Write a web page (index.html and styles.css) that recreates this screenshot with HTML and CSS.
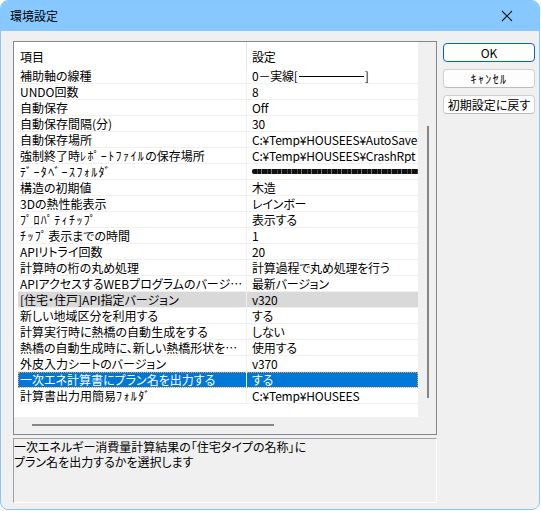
FILE: index.html
```html
<!DOCTYPE html>
<html lang="ja">
<head>
<meta charset="utf-8">
<title>環境設定</title>
<link rel="stylesheet" href="styles.css">
</head>
<body>
<div class="window">
  <div class="titlebar">
    <span class="title">環境設定</span>
    <svg class="close" width="12" height="12" viewBox="0 0 12 12"><path d="M1 1 L11 11 M11 1 L1 11" stroke="#1a1a1a" stroke-width="1.1" fill="none"/></svg>
  </div>
  <div class="content">
    <div class="main">
      <div class="listbox">
        <div class="view">
          <div class="row header"><div class="c1">項目</div><div class="c2">設定</div></div>
          <div class="row"><div class="c1">補助軸の線種</div><div class="c2">0－実線[<span class="line"></span>]</div></div>
          <div class="row"><div class="c1">UNDO回数</div><div class="c2">8</div></div>
          <div class="row"><div class="c1">自動保存</div><div class="c2">Off</div></div>
          <div class="row"><div class="c1">自動保存間隔(分)</div><div class="c2">30</div></div>
          <div class="row"><div class="c1">自動保存場所</div><div class="c2">C:¥Temp¥HOUSEES¥AutoSave</div></div>
          <div class="row"><div class="c1">強制終了時<span class="hw">ﾚﾎﾟｰﾄﾌｧｲﾙ</span>の保存場所</div><div class="c2">C:¥Temp¥HOUSEES¥CrashRpt</div></div>
          <div class="row"><div class="c1"><span class="hw">ﾃﾞｰﾀﾍﾞｰｽﾌｫﾙﾀﾞ</span></div><div class="c2"><span class="redacted"></span></div></div>
          <div class="row"><div class="c1">構造の初期値</div><div class="c2">木造</div></div>
          <div class="row"><div class="c1">3Dの熱性能表示</div><div class="c2">レインボー</div></div>
          <div class="row"><div class="c1"><span class="hw">ﾌﾟﾛﾊﾟﾃｨﾁｯﾌﾟ</span></div><div class="c2">表示する</div></div>
          <div class="row"><div class="c1"><span class="hw">ﾁｯﾌﾟ</span>表示までの時間</div><div class="c2">1</div></div>
          <div class="row"><div class="c1">APIリトライ回数</div><div class="c2">20</div></div>
          <div class="row"><div class="c1">計算時の桁の丸め処理</div><div class="c2">計算過程で丸め処理を行う</div></div>
          <div class="row"><div class="c1">APIアクセスするWEBプログラムのバージョン</div><div class="c2">最新バージョン</div></div>
          <div class="row grey"><div class="c1">[住宅・住戸]API指定バージョン</div><div class="c2">v320</div></div>
          <div class="row"><div class="c1">新しい地域区分を利用する</div><div class="c2">する</div></div>
          <div class="row"><div class="c1">計算実行時に熱橋の自動生成をする</div><div class="c2">しない</div></div>
          <div class="row"><div class="c1">熱橋の自動生成時に、新しい熱橋形状を使用する</div><div class="c2">使用する</div></div>
          <div class="row"><div class="c1">外皮入力シートのバージョン</div><div class="c2">v370</div></div>
          <div class="row selected"><div class="c1">一次エネ計算書にプラン名を出力する</div><div class="c2">する</div></div>
          <div class="row"><div class="c1">計算書出力用簡易<span class="hw">ﾌｫﾙﾀﾞ</span></div><div class="c2">C:¥Temp¥HOUSEES</div></div>
        </div>
        <div class="vscroll"><div class="vthumb"></div></div>
        <div class="hscroll"><div class="hthumb"></div></div>
        <div class="corner"></div>
      </div>
      <div class="desc">一次エネルギー消費量計算結果の「住宅タイプの名称」に<br>プラン名を出力するかを選択します</div>
    </div>
    <div class="buttons">
      <button class="btn default">OK</button>
      <button class="btn"><span class="hw">ｷｬﾝｾﾙ</span></button>
      <button class="btn">初期設定に戻す</button>
    </div>
  </div>
</div>
</body>
</html>
```
FILE: styles.css
```css
* { box-sizing: border-box; }
html, body { margin: 0; padding: 0; background: #ffffff; }
body {
  font-family: "Noto Sans CJK JP", "Noto Sans", sans-serif;
  font-size: 12px;
  color: #000;
  font-feature-settings: "palt";
}
.window {
  width: 540px;
  height: 510px;
  border: 1px solid #86c6fa;
  border-radius: 8px;
  overflow: hidden;
  background: #f0f0f0;
  display: flex;
  flex-direction: column;
}
.titlebar {
  height: 30px;
  flex: none;
  background: #86c8ff;
  display: flex;
  align-items: center;
  justify-content: space-between;
  padding: 0 26px 0 9px;
}
.title { font-size: 12px; color: #000; line-height: 16px; font-feature-settings: normal; }
.close { display: block; }
.content {
  display: flex;
  padding: 10px 0 0 12px;
}
.main { width: 424px; display: flex; flex-direction: column; gap: 3px; }
.listbox {
  height: 394px;
  border: 1px solid #828790;
  display: grid;
  grid-template-columns: 404px 18px;
  grid-template-rows: 375px 17px;
  background: #f0f0f0;
}
.view {
  background: #ffffff;
  overflow: hidden;
  padding-left: 4px;
}
.row {
  display: flex;
  height: 16px;
  line-height: 16px;
  border-bottom: 1px solid #f0f0f0;
  white-space: nowrap;
}
.row .c1 {
  width: 229px;
  flex: none;
  padding-left: 2px;
  border-right: 1px solid #f0f0f0;
  overflow: hidden;
  text-overflow: ellipsis;
}
.row .c2 {
  flex: 1;
  padding-left: 5px;
  overflow: hidden;
  letter-spacing: -0.2px;
}
.hw {
  font-feature-settings: normal;
  letter-spacing: 1.4px;
}
.row.header {
  height: 26px;
  border-bottom: none;
  line-height: 20px;
  padding-top: 5px;
}
.row.header .c1 { border-right: 1px solid #e5e5e5; margin-top: -5px; padding-top: 5px; }
.row.grey { background: #d9d9d9; }
.row.selected {
  background: #0078d7;
  color: #ffffff;
  outline: 1px dotted #f0a050;
  outline-offset: -1px;
}
.line {
  display: inline-block;
  width: 65px;
  height: 1px;
  background: #000;
  vertical-align: 4px;
  margin: 0 1px;
}
.redacted {
  display: inline-block;
  width: 168px;
  height: 5px;
  vertical-align: 3px;
  background: repeating-linear-gradient(90deg, #111 0 5px, #444 5px 6px, #111 6px 9px, #777 9px 10px);
  border-radius: 2px;
}
.vscroll { background: #f0f0f0; padding: 84px 0 0 9px; }
.vthumb { width: 2px; height: 272px; background: #868686; }
.hscroll { background: #f0f0f0; padding: 7px 0 0 18px; }
.hthumb { width: 242px; height: 2px; background: #868686; }
.corner { background: #f0f0f0; }
.desc {
  height: 65px;
  border-top: 1px solid #a0a0a0;
  border-left: 1px solid #a0a0a0;
  border-right: 1px solid #ffffff;
  border-bottom: 1px solid #ffffff;
  line-height: 15px;
  padding: 0;
  white-space: nowrap;
  overflow: hidden;
}
.buttons {
  margin: 2px 0 0 6px;
  width: 92px;
  display: flex;
  flex-direction: column;
  gap: 7px;
}
.btn {
  height: 19px;
  width: 92px;
  padding: 0;
  font-family: inherit;
  font-size: 12px;
  font-feature-settings: "palt";
  line-height: 15px;
  color: #000;
  background: #fdfdfd;
  border: 1px solid #d0d0d0;
  border-bottom-color: #bcbcbc;
  border-radius: 4px;
}
.btn.default { border: 1px solid #0067c0; }
```
